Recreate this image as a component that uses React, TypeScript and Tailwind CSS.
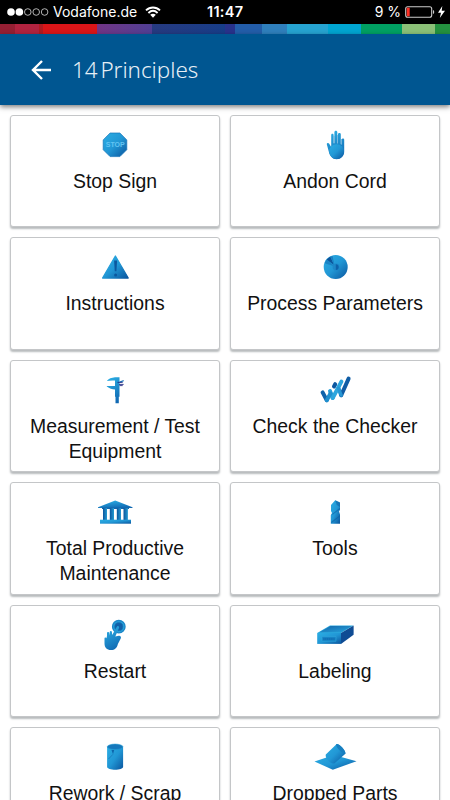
import type { ReactNode } from 'react'

interface Principle {
  id: string
  label: string
  icon: ReactNode
}

const stripes = [
  { color: 'bg-[#951f33]', width: 'w-[15px]' },
  { color: 'bg-[#b1233f]', width: 'w-[24px]' },
  { color: 'bg-[#b21a20]', width: 'w-[4px]' },
  { color: 'bg-[#da1518]', width: 'w-[54px]' },
  { color: 'bg-gradient-to-r from-[#713485] to-[#503f94]', width: 'w-[55px]' },
  { color: 'bg-gradient-to-r from-[#263a80] to-[#173d88]', width: 'w-[73px]' },
  { color: 'bg-[#28328b]', width: 'w-[10px]' },
  { color: 'bg-[#235da9]', width: 'w-[27px]' },
  { color: 'bg-[#2f7fbc]', width: 'w-[25px]' },
  { color: 'bg-[#26a3d0]', width: 'w-[41px]' },
  { color: 'bg-[#00a5d1]', width: 'w-[33px]' },
  { color: 'bg-[#00a062]', width: 'w-[41px]' },
  { color: 'bg-[#8bc077]', width: 'w-[33px]' },
  { color: 'bg-[#24913f]', width: 'flex-1' },
]

function Gradients() {
  return (
    <svg className="absolute w-0 h-0" aria-hidden="true">
      <defs>
        <linearGradient id="blue" x1="0" y1="0" x2="1" y2="1">
          <stop offset="0" stopColor="#2badE3" />
          <stop offset="0.5" stopColor="#2197d5" />
          <stop offset="1" stopColor="#0a559e" />
        </linearGradient>
        <linearGradient id="blueDown" x1="0.3" y1="0" x2="0.7" y2="1">
          <stop offset="0" stopColor="#2badE3" />
          <stop offset="1" stopColor="#1068b2" />
        </linearGradient>
        <linearGradient id="blueUp" x1="0" y1="0" x2="1" y2="1">
          <stop offset="0" stopColor="#1264aa" />
          <stop offset="1" stopColor="#27a5dd" />
        </linearGradient>
        <linearGradient id="pillar" x1="0" y1="0" x2="1" y2="0">
          <stop offset="0" stopColor="#0b559c" />
          <stop offset="1" stopColor="#249bd3" />
        </linearGradient>
      </defs>
    </svg>
  )
}

const principles: Principle[] = [
  {
    id: 'stop-sign',
    label: 'Stop Sign',
    icon: (
      <>
        <path d="M20.1 8h9.8l6.9 6.9v9.8l-6.9 6.9h-9.8l-6.9-6.9v-9.8z" fill="url(#blue)" stroke="#1473b7" strokeWidth="0.7" />
        <text x="25.2" y="22.3" fontSize="7" fontWeight="700" textAnchor="middle" fill="#62c4f2">
          STOP
        </text>
      </>
    ),
  },
  {
    id: 'andon-cord',
    label: 'Andon Cord',
    icon: (
      <>
        <path
          d="M18.9 27 16.8 19.3C16.5 17.8 18.6 17.3 19.2 18.8L21.2 22V10.2C21.2 8.4 23.6 8.4 23.6 10.2V18H24.4V7.2C24.4 5.2 27.3 5.2 27.3 7.2V18H28V9.4C28 7.6 30.8 7.6 30.8 9.4V19H31.8V14.6C31.8 13 34.2 13 34.2 14.6V26.5C34.2 31.2 31 34.2 26.6 34.2 22.4 34.2 19.8 31 18.9 27z"
          fill="url(#blueDown)"
        />
        <path d="M23.6 11v8h.8v-8zM27.3 10v9h.7v-9zM30.8 14v6h1v-6z" fill="#5aa9d8" />
        <circle cx="26.6" cy="26.6" r="7.4" fill="url(#blue)" />
      </>
    ),
  },
  {
    id: 'instructions',
    label: 'Instructions',
    icon: (
      <>
        <path d="M25.4 9 38.2 31H12.6z" fill="url(#blue)" stroke="url(#blue)" strokeWidth="1.3" strokeLinejoin="round" />
        <path d="M24.1 13.5h3l-.7 10.7h-1.6z" fill="#0b589f" />
        <circle cx="25.6" cy="28" r="1.5" fill="#0b589f" />
      </>
    ),
  },
  {
    id: 'process-parameters',
    label: 'Process Parameters',
    icon: (
      <>
        <circle cx="25.7" cy="20" r="12" fill="url(#blue)" />
        <path d="M25 19.5 14.5 16.3 16.5 12.5z" fill="#1a83c4" />
        <path d="M24 18 16.6 12.4 20.3 9.5z" fill="#0c559b" />
        <path d="M24.4 18 20.4 9.8l2.2-.7z" fill="#1a7fc1" />
        <circle cx="26" cy="20" r="3.4" fill="#1d87c8" />
        <path d="M25.8 17.2a2.9 2.9 0 0 1 0 5.8z" fill="#0e62aa" />
      </>
    ),
  },
  {
    id: 'measurement',
    label: 'Measurement / Test Equipment',
    icon: (
      <>
        <path d="M25 7.2h4.5v19.6h-.7v6.4h-3.3v-6.4H25v-7.4c-2.8 0-5.5-1.2-8.2-3V16H25v-5.4c-3.2-.5-5.8.2-8.2.4C18.4 8.6 21.7 7.5 25 7.2z" fill="url(#blueDown)" />
        <path d="M29.5 11.4 33.7 10v1.2l-3 1.2h-1.2z" fill="#1871b5" />
        <path d="M27.5 12.4h5.2M29 14.4h4.6M29.5 15.6h3.2" stroke="#242b84" strokeWidth="0.9" />
      </>
    ),
  },
  {
    id: 'check-the-checker',
    label: 'Check the Checker',
    icon: (
      <g fill="none" strokeWidth="4" strokeLinecap="round" strokeLinejoin="round">
        <path d="M28.6 18.5 31.2 25.2" stroke="#2ba5dd" />
        <path d="M31.2 25.2 38.6 8.6" stroke="#0f5ca5" />
        <path d="M20 21 22.7 28" stroke="#27a0da" />
        <path d="M24 16.5 25.2 14.2" stroke="#0d57a0" />
        <path d="M22.7 28 31.4 11.6" stroke="#2ba5dd" />
        <path d="M12.6 22.4 16.8 30.2" stroke="#0e62aa" />
        <path d="M16.8 30.2 20.5 23.4" stroke="#1e8fce" />
        <path d="M28.6 18.5 31.2 25.2" stroke="#2696d4" strokeWidth="3.2" />
      </g>
    ),
  },
  {
    id: 'tpm',
    label: 'Total Productive Maintenance',
    icon: (
      <>
        <path d="M25.2 8.5 42.5 15.3v.6H8v-.6z" fill="url(#blueDown)" />
        <path d="M12 15.5h27V17H12z" fill="#1268ae" />
        <path d="M13 16h4v12h-4z" fill="url(#pillar)" />
        <path d="M19.8 16h4.2v12h-4.2z" fill="url(#pillar)" />
        <path d="M26.8 16H31v12h-4.2z" fill="url(#pillar)" />
        <path d="M33.5 16h4.4v12h-4.4z" fill="url(#pillar)" />
        <path d="M10 27.7h31v4H10z" fill="url(#blue)" />
      </>
    ),
  },
  {
    id: 'tools',
    label: 'Tools',
    icon: (
      <>
        <path d="M25.2 8.2 30 10.6V18l-1 1.2 1 3.3v9.2h-9.2v-8.4l1.2-2.2-1-2V13z" fill="url(#blue)" />
        <path d="M25.2 8.2 30 10.6V15l-3.2-2zM21 22.7 30 15.7v1.6l-7 5.2zM21 30 30 23v1.5l-8 6.2H21z" fill="#0d5b9f" opacity="0.55" />
      </>
    ),
  },
  {
    id: 'restart',
    label: 'Restart',
    icon: (
      <>
        <circle cx="28.8" cy="11.7" r="6.2" fill="#2aa5dc" stroke="#1b86c8" strokeWidth="1.4" />
        <circle cx="28.8" cy="11.7" r="4.1" fill="#125fa8" stroke="#1474b8" strokeWidth="0.7" />
        <path
          d="M14.5 23.8c-.2-1.4 1.5-1.8 1.9-.5L17 21V18c0-1.5 2.1-1.5 2.2 0l.5 2.5V17c.2-1.4 2.1-1.4 2.2.1l.3 2.8 4.5-8c.8-1.7 3.1-.5 2.3 1.1l-3.7 8.4 3.4-.7c1.9-.3 2.9 1.5 1.9 3.1L27.9 29c-1 4.2-3.2 6.1-6.8 6.1-4.3 0-6.6-2.5-6.6-6.8z"
          fill="url(#blueDown)"
        />
      </>
    ),
  },
  {
    id: 'labeling',
    label: 'Labeling',
    icon: (
      <>
        <path d="M7.2 18 20 10.5h23.5L31 18z" fill="#2aa8dd" />
        <path d="M9.5 17.3 20.6 11h21L31 17.3z" fill="url(#blueUp)" />
        <path d="M7.2 18H31v10.9H7.2z" fill="url(#blue)" />
        <path d="M31 18 43.6 10.5v9.3L31 28.9z" fill="#0f4c94" />
        <path d="M12 21.5h14v4.8H12z" fill="#1683c5" stroke="#35a8de" strokeWidth="0.5" />
        <path d="M13.3 24h11.4" stroke="#0c5da5" strokeWidth="1.2" strokeDasharray="1.4 0.4" />
      </>
    ),
  },
  {
    id: 'rework',
    label: 'Rework / Scrap',
    icon: (
      <>
        <path d="M17.1 9.7h16v20c0 4-16 4-16 0z" fill="url(#blue)" />
        <ellipse cx="25.1" cy="9.8" rx="7.8" ry="2.7" fill="#1578bc" stroke="#249ad2" strokeWidth="0.6" />
        <path d="M21.5 13 23 17.3l1.2-4.2" fill="#0d65ab" />
        <path d="M23 17.3 18.5 22" stroke="#1673b7" strokeWidth="0.7" />
      </>
    ),
  },
  {
    id: 'dropped-parts',
    label: 'Dropped Parts',
    icon: (
      <>
        <path d="M4.5 24.5 24 18l22.5 6.2L22.8 32.8z" fill="url(#blue)" />
        <path d="M15.8 17.4 26.2 7.4c1-2.2 9.8 5.6 9.2 9.3L24.6 26.3c-1.8 1.6-10-3.8-8.8-8.9z" fill="url(#blue)" />
        <path d="M26.2 7.4c1.8-2 9.8 5.6 9.2 9.3-2.3.4-9.8-6.1-9.2-9.3z" fill="#187fc0" />
      </>
    ),
  },
]

function StatusBar() {
  return (
    <div className="relative flex h-6 items-center justify-between bg-black pl-[7px] pr-[5px] text-white font-['Inter',sans-serif]">
      <div className="flex items-center">
        <svg width="42" height="10" viewBox="0 0 42 10">
          <circle cx="4" cy="5" r="3.8" fill="#fff" />
          <circle cx="12.4" cy="5" r="3.8" fill="#fff" />
          <g fill="none" stroke="#ddd" strokeWidth="0.8">
            <circle cx="20.8" cy="5" r="3.3" />
            <circle cx="29.2" cy="5" r="3.3" />
            <circle cx="37.6" cy="5" r="3.3" />
          </g>
        </svg>
        <span className="ml-[4px] w-[86px] whitespace-nowrap text-[14px] leading-6">Vodafone.de</span>
        <svg className="ml-[6px]" width="16" height="12" viewBox="0 0 16 12" fill="none" stroke="#fff" strokeWidth="1.9">
          <path d="M1 4.4c4-3.9 10-3.9 14 0M3.4 7c2.8-2.6 6.4-2.6 9.2 0" />
          <path d="M5.2 8.8c1.7-1.5 3.9-1.5 5.6 0L8 11.7z" fill="#fff" stroke="none" />
        </svg>
      </div>
      <span className="absolute left-[207px] text-[14.5px] font-semibold leading-6 tracking-[0.3px]">11:47</span>
      <div className="flex items-center">
        <span className="text-[14px] leading-6">9 %</span>
        <svg className="ml-[4px]" width="30" height="12" viewBox="0 0 30 12">
          <rect x="0.7" y="0.7" width="26" height="10.6" rx="2" fill="none" stroke="#ccc" strokeWidth="1.1" />
          <rect x="1.7" y="1.7" width="3" height="8.6" fill="#ff3024" />
          <path d="M28 4c1.6.4 1.6 3.6 0 4z" fill="#ccc" />
        </svg>
        <svg className="ml-[3px]" width="7" height="12" viewBox="0 0 7 12">
          <path d="M4.3 0 0 6.7h3L1.8 12 7 4.8H3.7z" fill="#fff" />
        </svg>
      </div>
    </div>
  )
}

function PrincipleCard({ principle }: { principle: Principle }) {
  return (
    <button className="flex h-[112.4px] flex-col items-center rounded-[3px] border border-[#c4c6c8] bg-white pt-[9px] shadow-[0_2px_2px_#b8bbbd]">
      <svg className="shrink-0" width="50" height="36" viewBox="0 0 50 36">
        {principle.icon}
      </svg>
      <span className="mt-[8px] w-[190px] text-center text-[19.4px] leading-[25px] text-[#111]">
        {principle.label}
      </span>
    </button>
  )
}

export default function App() {
  return (
    <div className="h-[800px] w-[450px] overflow-hidden bg-white font-['Liberation_Sans',sans-serif]">
      <Gradients />
      <StatusBar />
      <div className="flex h-[10px]">
        {stripes.map((stripe) => (
          <div key={stripe.color} className={`${stripe.color} ${stripe.width}`} />
        ))}
      </div>
      <header className="relative flex h-[71px] items-center bg-[#005691] pl-[31px] text-[#e6eff6] shadow-[0_2px_5px_rgba(0,0,0,0.5)]">
        <svg width="21" height="20" viewBox="0 0 21 20" fill="none" stroke="#fff" strokeWidth="2.4">
          <path d="M20 10H2M11 1 2 10l9 9" />
        </svg>
        <h1 className="ml-[20px] text-[22.4px] font-light [word-spacing:-3px] font-['Noto_Sans','Open_Sans',sans-serif]">
          14 Principles
        </h1>
      </header>
      <main className="grid grid-cols-2 gap-[10px] px-[10px] pt-[10px]">
        {principles.map((principle) => (
          <PrincipleCard key={principle.id} principle={principle} />
        ))}
      </main>
    </div>
  )
}
